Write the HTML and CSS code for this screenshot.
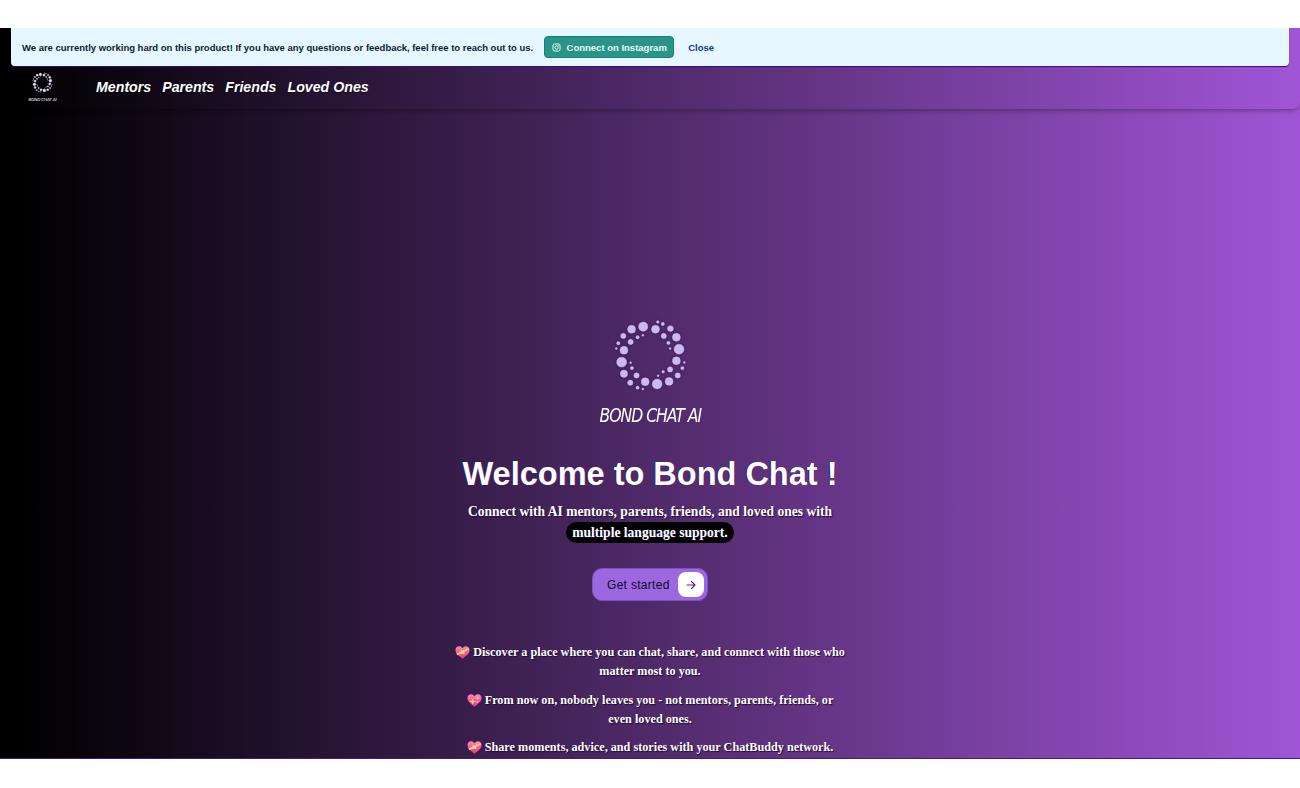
FILE: index.html
```html
<!DOCTYPE html>
<html lang="en">
<head>
<meta charset="utf-8">
<title>Bond Chat</title>
<link rel="stylesheet" href="styles.css">
</head>
<body>
<svg class="defs" width="0" height="0" aria-hidden="true">
  <defs>
    <linearGradient id="heart-fill" x1="0" y1="0" x2="0" y2="1">
      <stop offset="0" stop-color="#ff86bd"/>
      <stop offset="1" stop-color="#e8358a"/>
    </linearGradient>
    <symbol id="ring" viewBox="100 22 226 226">
      <g>
        <circle cx="191" cy="48" r="14"/><circle cx="156" cy="56" r="12"/><circle cx="131" cy="76" r="8"/><circle cx="116" cy="98" r="5"/><circle cx="110" cy="114" r="3"/><circle cx="133" cy="119" r="12"/><circle cx="153" cy="94" r="8"/><circle cx="174" cy="80" r="5"/><circle cx="190" cy="74" r="3"/><circle cx="235" cy="34" r="4"/><circle cx="250" cy="40" r="5"/><circle cx="273" cy="54" r="9"/><circle cx="228" cy="56" r="12"/><circle cx="253" cy="76" r="8"/><circle cx="291" cy="80" r="12"/><circle cx="267" cy="97" r="5"/><circle cx="272" cy="114" r="3"/><circle cx="299" cy="116" r="15"/><circle cx="291" cy="151" r="12"/><circle cx="315" cy="156" r="3"/><circle cx="309" cy="173" r="5"/><circle cx="272" cy="177" r="8"/><circle cx="251" cy="184" r="4"/><circle cx="295" cy="195" r="8"/><circle cx="236" cy="196" r="3"/><circle cx="269" cy="213" r="12"/><circle cx="233" cy="221" r="15"/><circle cx="197" cy="214" r="12"/><circle cx="171" cy="195" r="8"/><circle cx="157" cy="173" r="5"/><circle cx="153" cy="157" r="3"/><circle cx="126" cy="155" r="15"/><circle cx="133" cy="190" r="11"/><circle cx="152" cy="217" r="8"/><circle cx="174" cy="232" r="5"/><circle cx="190" cy="236" r="3"/>
      </g>
    </symbol>
    <symbol id="heart" viewBox="0 0 16 14">
      <path fill="url(#heart-fill)" d="M8 13.600C3 10.200.4 7.600.4 4.400.4 2 2.200.4 4.300.4 5.800.4 7.200 1.200 8 2.500 8.800 1.200 10.200.4 11.700.4 13.800.4 15.600 2 15.600 4.400 15.600 7.600 13 10.200 8 13.600Z"/>
      <path fill="#ffd83d" d="M1.200 8.400 13.900 2.200l1 1.500L2.700 10Z"/>
      <path fill="#ffe97a" d="M6 4.300 8 5.300l2-1-.4 3 .9 1.700-2.500-1-2.300 1 .8-2Z"/>
    </symbol>
    <symbol id="sparkle-heart" viewBox="0 0 16 14">
      <path fill="url(#heart-fill)" d="M8 13.600C3 10.200.4 7.600.4 4.400.4 2 2.200.4 4.300.4 5.800.4 7.200 1.200 8 2.500 8.800 1.200 10.200.4 11.700.4 13.800.4 15.600 2 15.600 4.400 15.600 7.600 13 10.200 8 13.600Z"/>
      <path fill="#ffe14d" d="M6 4.500l.9 2.700 2.700.9-2.700.9L6 11.700 5.100 9 2.400 8.100l2.700-.9ZM11.500 2l.6 1.700 1.700.6-1.700.6-.6 1.700-.6-1.700-1.700-.6 1.700-.6Z"/>
      <circle cx="11" cy="8.500" r=".9" fill="#ffb0d4"/>
    </symbol>
  </defs>
</svg>
<div class="page">
  <div class="banner">
    <span class="banner-text">We are currently working hard on this product! If you have any questions or feedback, feel free to reach out to us.</span>
    <a class="insta" href="#">
      <svg class="insta-icon" viewBox="0 0 24 24" fill="none" stroke="currentColor" stroke-width="2.600"><rect x="2.500" y="2.500" width="19" height="19" rx="5"/><circle cx="12" cy="12" r="4.500"/><circle cx="17.500" cy="6.500" r="0.600"/></svg>
      Connect on Instagram
    </a>
    <a class="close" href="#">Close</a>
  </div>
  <nav class="nav">
    <div class="nav-logo">
      <svg class="nav-ring"><use href="#ring"/></svg>
      <span class="nav-logo-text">BOND CHAT AI</span>
    </div>
    <ul class="nav-links">
      <li>Mentors</li>
      <li>Parents</li>
      <li>Friends</li>
      <li>Loved Ones</li>
    </ul>
  </nav>
  <main class="hero">
    <svg class="hero-ring"><use href="#ring"/></svg>
    <div class="hero-logo-text">BOND CHAT AI</div>
    <h1 class="title">Welcome to Bond Chat !</h1>
    <p class="lead">Connect with AI mentors, parents, friends, and loved ones with<br><span class="pill">multiple language support.</span></p>
    <a class="cta" href="#">
      <span>Get started</span>
      <span class="cta-arrow">
        <svg viewBox="0 0 24 24" fill="none" stroke="currentColor" stroke-width="2.200" stroke-linecap="round" stroke-linejoin="round"><path d="M4 12h16M13 5l7 7-7 7"/></svg>
      </span>
    </a>
    <div class="features">
      <p><svg class="emoji"><use href="#heart"/></svg> Discover a place where you can chat, share, and connect with those who matter most to you.</p>
      <p><svg class="emoji"><use href="#sparkle-heart"/></svg> From now on, nobody leaves you - not mentors, parents, friends, or even loved ones.</p>
      <p><svg class="emoji"><use href="#heart"/></svg> Share moments, advice, and stories with your ChatBuddy network.</p>
    </div>
  </main>
</div>
</body>
</html>
```
FILE: styles.css
```css
* { box-sizing: border-box; }
html, body { margin: 0; height: 100%; background: #fff; overflow: hidden; }
.defs { position: absolute; }
.page {
  position: relative;
  margin-top: 28px;
  height: 731px;
  overflow: hidden;
  background: linear-gradient(to right, #000 0%, #000 1.500%, #a155d6 100%);
  border-bottom: 1px solid #4a1a78;
  font-family: "Liberation Sans", Arial, sans-serif;
  color: #fff;
}
.banner {
  position: absolute;
  top: 0;
  left: 11px;
  right: 11px;
  height: 38px;
  z-index: 2;
  display: flex;
  align-items: center;
  padding: 0 11px;
  background: #e6f7ff;
  border-radius: 0 0 4px 4px;
  box-shadow: 0 1px 1px #3c0a78;
  color: #0d1a3a;
  font-size: 9.5px;
  font-weight: 700;
}
.banner-text { white-space: nowrap; letter-spacing: -.015px; }
.insta {
  margin-left: 11px;
  height: 22px;
  width: 130px;
  display: flex;
  align-items: center;
  justify-content: center;
  gap: 6px;
  background: #2a9488;
  border: 1px solid #14807a;
  border-radius: 4px;
  color: #e9fbf8;
  text-decoration: none;
  font-size: 9.5px;
  font-weight: 700;
}
.insta-icon { width: 9px; height: 9px; }
.close { margin-left: 14px; color: #0b3a8c; text-decoration: none; font-size: 9.5px; font-weight: 700; }
.nav {
  height: 81px;
  padding-top: 38px;
  display: flex;
  align-items: center;
  border-radius: 0 0 8px 8px;
  background: linear-gradient(to right, #000 0%, #000 1.500%, #a155d6 100%);
  box-shadow: 0 2px 5px rgba(0,0,0,.3);
}
.nav-logo {
  width: 85px;
  flex: none;
  display: flex;
  flex-direction: column;
  align-items: center;
}
.nav-ring { width: 21px; height: 21px; fill: #e8def8; stroke: #e8def8; stroke-width: 3; }
.nav-logo-text {
  margin-top: 4px;
  font-family: "DejaVu Sans", sans-serif;
  font-size: 4.200px;
  line-height: 6px;
  letter-spacing: -.2px;
  font-style: italic;
  white-space: nowrap;
}
.nav-links {
  list-style: none;
  margin: -2px 0 0 11px;
  padding: 0;
  display: flex;
  gap: 11px;
  font-size: 14.200px;
  font-weight: 700;
  font-style: italic;
  text-shadow: 0 1px 2px rgba(0,0,0,.5);
}
.hero {
  display: flex;
  flex-direction: column;
  align-items: center;
  padding-top: 209px;
}
.hero-ring {
  width: 75px;
  height: 75px;
  margin-left: 1px;
  fill: #cdb8f0;
  stroke: #cdb8f0;
  stroke-width: 1.500;
  filter: drop-shadow(0 0 1px #2a0f4c);
}
.hero-logo-text {
  margin-top: 12px;
  font-family: "DejaVu Sans", sans-serif;
  font-weight: 200;
  font-style: italic;
  font-size: 18px;
  line-height: 20px;
  letter-spacing: -1.200px;
  white-space: nowrap;
  transform: scale(.87, 1.100);
}
.title {
  margin: 29px 0 0;
  font-size: 32.500px;
  line-height: 40px;
  font-weight: 700;
  text-shadow: 1px 0 0 #6b1c5e, -1px 0 0 #20205e;
}
.lead {
  margin: 7px 0 0;
  text-align: center;
  font-family: "Liberation Serif", serif;
  font-weight: 700;
  font-size: 13.550px;
  line-height: 21px;
  text-shadow: 1px 1px 1px #1c0a30;
}
.pill {
  display: inline-block;
  padding: 0 6px;
  background: #000;
  border-radius: 11px;
}
.cta {
  margin-top: 25px;
  width: 116px;
  height: 33px;
  display: flex;
  align-items: center;
  justify-content: space-between;
  padding: 0 3px 0 14px;
  background: #9b68e0;
  border: 1px solid #7c4fc4;
  border-radius: 10px;
  color: #14052c;
  text-decoration: none;
  font-size: 12px;
  letter-spacing: .3px;
}
.cta-arrow {
  width: 26px;
  height: 25px;
  display: flex;
  align-items: center;
  justify-content: center;
  background: #fff;
  border-radius: 8px;
  color: #5a1fb0;
}
.cta-arrow svg { width: 12px; height: 12px; }
.features {
  margin-top: 42px;
  width: 393px;
  text-align: center;
  font-family: "Liberation Serif", serif;
  font-weight: 700;
  font-size: 12.200px;
  line-height: 19px;
  text-shadow: 1px 1px 1px #1c0a30;
}
.features p { margin: 0 0 9.500px; }
.emoji { width: 15px; height: 13px; vertical-align: -3px; }
```
